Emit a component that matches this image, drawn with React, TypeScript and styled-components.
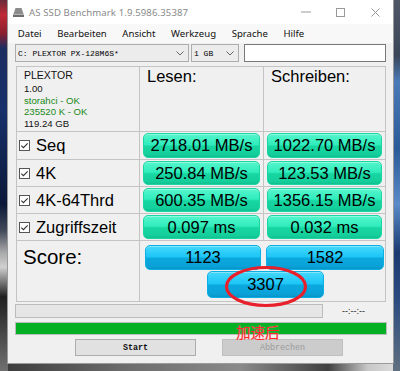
import React from "react";
import styled, { createGlobalStyle } from "styled-components";

const Global = createGlobalStyle`
  html, body { margin: 0; padding: 0; }
  body {
    width: 400px;
    height: 371px;
    overflow: hidden;
    font-family: "Liberation Sans", Arial, sans-serif;
  }
`;

const Desktop = styled.div`
  position: relative;
  width: 400px;
  height: 371px;
  overflow: hidden;
  box-sizing: border-box;
  padding-left: 7px;
  background:
    linear-gradient(180deg, #6a2a3a 0%, #c02a35 4%, #8a2030 9%, #1c2c60 13%, #16306a 30%, #0c1838 55%, #404858 62%, #a8a8a8 68%, #d0d0d0 72%, #202020 80%, #505050 92%, #707070 100%) left top / 8px 100% no-repeat,
    linear-gradient(180deg, #505868 0%, #3a4658 15%, #4a7ab8 22%, #2a5a98 40%, #5a8ac8 55%, #1a3a70 68%, #2a4a80 80%, #607080 100%) right top / 7px 100% no-repeat,
    linear-gradient(90deg, #3a3a3a 0%, #6a6a6a 30%, #8a8a8a 60%, #404040 82%, #c8c8c8 92%, #e0e0e0 100%) left bottom / 100% 8px no-repeat,
    #303030;
`;

const Window = styled.div`
  width: 387px;
  height: 364px;
  box-sizing: border-box;
  background: #f0f0f0;
  border: 1px solid #9a9a9a;
  border-top: none;
  display: flex;
  flex-direction: column;
`;

const TitleBar = styled.div`
  height: 24px;
  background: #ffffff;
  display: flex;
  align-items: center;
  padding-left: 5px;
`;

const TitleText = styled.span`
  margin-left: 5px;
  font-family: "Noto Sans", "Liberation Sans", sans-serif;
  font-size: 9.6px;
  color: #8a8a8a;
  letter-spacing: 0.1px;
`;

const Controls = styled.div`
  margin-left: auto;
  display: flex;
  height: 24px;
`;

const CtrlButton = styled.div`
  width: 35px;
  height: 24px;
  display: flex;
  align-items: center;
  justify-content: center;
`;

const MenuBar = styled.div`
  height: 19px;
  background: #f8f8f8;
  display: flex;
  align-items: center;
  padding-left: 2px;
`;

const MenuItem = styled.span`
  padding: 0 7.8px;
  font-family: "Noto Sans", "Liberation Sans", sans-serif;
  font-size: 9.6px;
  color: #111;
`;

const ToolRow = styled.div`
  display: flex;
  align-items: center;
  height: 18px;
  margin-top: 1px;
  padding-left: 7px;
`;

const Combo = styled.div<{ $w: number }>`
  width: ${(p) => p.$w}px;
  height: 18px;
  box-sizing: border-box;
  border: 1px solid #adadad;
  background: #ececec;
  display: flex;
  align-items: center;
  padding-left: 2px;
  padding-right: 4px;
  margin-right: 2px;
  font-family: "Liberation Mono", "DejaVu Sans Mono", monospace;
  font-size: 8px;
  color: #000;
`;

const ComboText = styled.span`
  flex: 1;
  white-space: nowrap;
`;

const TextBox = styled.div`
  width: 142px;
  height: 18px;
  margin-left: 3px;
  box-sizing: border-box;
  border: 1px solid #7a7a7a;
  background: #fff;
`;

const Panel = styled.div`
  margin: 4px 0 0 8px;
  width: 370px;
  display: grid;
  grid-template-columns: 122px 123px 121px;
  grid-template-rows: 64px 27px 26px 26px 26px 60px;
  gap: 1px;
  border: 1px solid #c4c4c4;
  background: #c4c4c4;
  box-sizing: border-box;
`;

const Cell = styled.div<{ $span?: number }>`
  background: #f0f0f0;
  grid-column: span ${(p) => p.$span ?? 1};
  display: flex;
  align-items: center;
  min-width: 0;
`;

const InfoCell = styled(Cell)`
  flex-direction: column;
  align-items: flex-start;
  padding: 1.5px 0 0 7px;
  box-sizing: border-box;
`;

const DriveName = styled.div`
  font-size: 10.5px;
  line-height: 13px;
  color: #111;
`;

const InfoLines = styled.div`
  margin-top: 1.5px;
`;

const InfoLine = styled.div<{ $ok?: boolean }>`
  font-size: 9.6px;
  line-height: 11.7px;
  color: ${(p) => (p.$ok ? "#1a8a1a" : "#111")};
`;

const HeadCell = styled(Cell)`
  align-items: flex-start;
  padding-left: 7px;
  font-size: 16.5px;
  line-height: 18px;
  color: #000;
`;

const RowLabel = styled(Cell)`
  padding-left: 2px;
  font-size: 16.5px;
  color: #000;
`;

const Check = styled.svg`
  width: 11px;
  height: 11px;
  margin-right: 6px;
  flex: none;
`;

const ValueCell = styled(Cell)`
  padding: 1px 3px 1px 3px;
  box-sizing: border-box;
  align-items: stretch;
`;

const ValueBox = styled.div<{ $tone: "green" | "blue" }>`
  flex: 1;
  display: flex;
  align-items: center;
  justify-content: center;
  border-radius: 5px;
  font-size: 16.5px;
  color: #000;
  box-sizing: border-box;
  border: 1px solid ${(p) => (p.$tone === "green" ? "#1ad6a2" : "#0ab0e4")};
  background: ${(p) =>
    p.$tone === "green"
      ? "linear-gradient(180deg, #55f6cc 0%, #30ecbc 46%, #17d6a2 54%, #14cf9b 88%, #10c090 100%)"
      : "linear-gradient(180deg, #45d8fc 0%, #1ec6f6 46%, #0aa8de 54%, #0aa2d8 88%, #0894c8 100%)"};
  box-shadow: inset 0 1px 0 rgba(255, 255, 255, 0.35);
`;

const ScoreLabel = styled(Cell)`
  align-items: flex-start;
  padding: 4px 0 0 6px;
  font-size: 20.5px;
  line-height: 24px;
  color: #000;
  box-sizing: border-box;
`;

const ScoreCell = styled(Cell)`
  flex-direction: column;
  align-items: stretch;
  padding: 4px 1px 2px 5px;
  box-sizing: border-box;
  gap: 1px;
`;

const ScorePair = styled.div`
  display: grid;
  grid-template-columns: 116px 118px;
  gap: 5px;
  height: 25px;
`;

const ScoreTotalRow = styled.div`
  display: flex;
  justify-content: center;
  height: 27px;
  padding-left: 2px;
`;

const TotalBox = styled(ValueBox)`
  flex: none;
  width: 117px;
`;

const ProgressRow = styled.div`
  display: flex;
  align-items: center;
  margin: 2px 0 0 7px;
  height: 14px;
`;

const ProgressTrack = styled.div`
  width: 308px;
  height: 14px;
  box-sizing: border-box;
  border: 1px solid #bcbcbc;
  background: #e6e6e6;
`;

const TimeLabel = styled.span`
  margin-left: 19px;
  font-size: 9px;
  color: #222;
`;

const GreenBar = styled.div`
  margin: 4px 0 0 7px;
  width: 372px;
  height: 13px;
  box-sizing: border-box;
  border: 1px solid #bcbcbc;
  background: #06b025;
`;

const ButtonRow = styled.div`
  display: flex;
  margin: 4px 0 0 67px;
  gap: 26px;
`;

const Button = styled.div<{ $disabled?: boolean }>`
  width: 121px;
  height: 17px;
  box-sizing: border-box;
  border: 1px solid ${(p) => (p.$disabled ? "#bfbfbf" : "#adadad")};
  background: ${(p) => (p.$disabled ? "#cccccc" : "#e1e1e1")};
  display: flex;
  align-items: center;
  justify-content: center;
  font-family: "Liberation Mono", "DejaVu Sans Mono", monospace;
  font-size: 8.4px;
  font-weight: ${(p) => (p.$disabled ? 400 : 700)};
  color: ${(p) => (p.$disabled ? "#9a9a9a" : "#111")};
`;

const Ellipse = styled.svg`
  position: absolute;
  left: 224px;
  top: 265px;
  width: 84px;
  height: 43px;
  pointer-events: none;
`;

const Note = styled.span`
  position: absolute;
  left: 236px;
  top: 323px;
  font-family: "Noto Sans CJK SC", sans-serif;
  font-size: 14.5px;
  line-height: 17px;
  color: #ff2626;
  text-shadow: 0 0 1px #ffb0c0;
`;

const CheckIcon = () => (
  <Check viewBox="0 0 11 11">
    <rect x="0.5" y="0.5" width="10" height="10" fill="#fff" stroke="#555" />
    <path d="M2.3 5.6 L4.4 7.7 L8.7 3.3" fill="none" stroke="#333" strokeWidth="1.1" />
  </Check>
);

const Chevron = () => (
  <svg width="8" height="5" viewBox="0 0 8 5">
    <path d="M0.5 0.5 L4 4 L7.5 0.5" fill="none" stroke="#666" strokeWidth="1" />
  </svg>
);

const rows = [
  { label: "Seq", read: "2718.01 MB/s", write: "1022.70 MB/s" },
  { label: "4K", read: "250.84 MB/s", write: "123.53 MB/s" },
  { label: "4K-64Thrd", read: "600.35 MB/s", write: "1356.15 MB/s" },
  { label: "Zugriffszeit", read: "0.097 ms", write: "0.032 ms" },
];

const menus = ["Datei", "Bearbeiten", "Ansicht", "Werkzeug", "Sprache", "Hilfe"];

export default function App() {
  return (
    <>
      <Global />
      <Desktop>
        <Window>
          <TitleBar>
            <svg width="11" height="9" viewBox="0 0 11 9">
              <path d="M2.5 0 H8.5 L10.5 6 H0.5 Z" fill="#8c8c8c" />
              <rect x="0" y="6.5" width="11" height="2.5" fill="#6e6e6e" />
            </svg>
            <TitleText>AS SSD Benchmark 1.9.5986.35387</TitleText>
            <Controls>
              <CtrlButton>
                <svg width="10" height="2" viewBox="0 0 10 2">
                  <rect x="0" y="0.5" width="10" height="1" fill="#999" />
                </svg>
              </CtrlButton>
              <CtrlButton>
                <svg width="9" height="9" viewBox="0 0 9 9">
                  <rect x="0.5" y="0.5" width="8" height="8" fill="none" stroke="#999" />
                </svg>
              </CtrlButton>
              <CtrlButton>
                <svg width="9" height="9" viewBox="0 0 9 9">
                  <path d="M0.5 0.5 L8.5 8.5 M8.5 0.5 L0.5 8.5" stroke="#999" strokeWidth="1" />
                </svg>
              </CtrlButton>
            </Controls>
          </TitleBar>
          <MenuBar>
            {menus.map((m) => (
              <MenuItem key={m}>{m}</MenuItem>
            ))}
          </MenuBar>
          <ToolRow>
            <Combo $w={174}>
              <ComboText>C: PLEXTOR PX-128M6S*</ComboText>
              <Chevron />
            </Combo>
            <Combo $w={48}>
              <ComboText>1 GB</ComboText>
              <Chevron />
            </Combo>
            <TextBox />
          </ToolRow>
          <Panel>
            <InfoCell>
              <DriveName>PLEXTOR</DriveName>
              <InfoLines>
                <InfoLine>1.00</InfoLine>
                <InfoLine $ok>storahci - OK</InfoLine>
                <InfoLine $ok>235520 K - OK</InfoLine>
                <InfoLine>119.24 GB</InfoLine>
              </InfoLines>
            </InfoCell>
            <HeadCell>Lesen:</HeadCell>
            <HeadCell>Schreiben:</HeadCell>
            {rows.map((r) => (
              <React.Fragment key={r.label}>
                <RowLabel>
                  <CheckIcon />
                  {r.label}
                </RowLabel>
                <ValueCell>
                  <ValueBox $tone="green">{r.read}</ValueBox>
                </ValueCell>
                <ValueCell>
                  <ValueBox $tone="green">{r.write}</ValueBox>
                </ValueCell>
              </React.Fragment>
            ))}
            <ScoreLabel>Score:</ScoreLabel>
            <ScoreCell $span={2}>
              <ScorePair>
                <ValueBox $tone="blue">1123</ValueBox>
                <ValueBox $tone="blue">1582</ValueBox>
              </ScorePair>
              <ScoreTotalRow>
                <TotalBox $tone="blue">3307</TotalBox>
              </ScoreTotalRow>
            </ScoreCell>
          </Panel>
          <ProgressRow>
            <ProgressTrack />
            <TimeLabel>--:--:--</TimeLabel>
          </ProgressRow>
          <GreenBar />
          <ButtonRow>
            <Button>Start</Button>
            <Button $disabled>Abbrechen</Button>
          </ButtonRow>
        </Window>
        <Ellipse viewBox="0 0 84 43">
          <ellipse cx="42" cy="21.5" rx="39.5" ry="19" fill="none" stroke="#e8202c" strokeWidth="3.2" />
        </Ellipse>
        <Note>加速后</Note>
      </Desktop>
    </>
  );
}
